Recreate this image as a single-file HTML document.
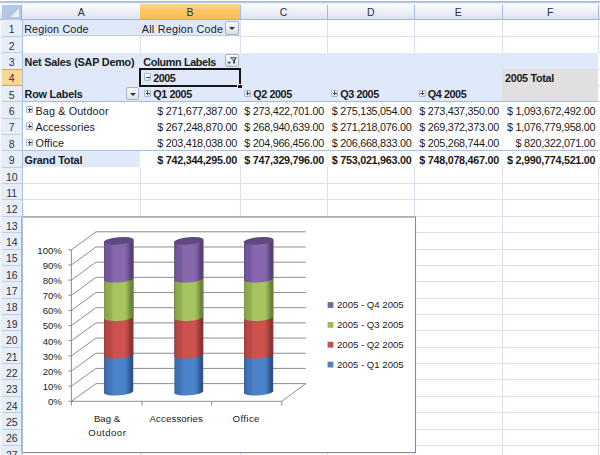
<!DOCTYPE html>
<html><head><meta charset="utf-8"><title>Pivot</title><style>
*{box-sizing:border-box;margin:0;padding:0}
html,body{width:600px;height:455px;overflow:hidden;background:#fff}
body{position:relative;font-family:"Liberation Sans",sans-serif;font-size:10.8px;color:#1a1a1a}
.a{position:absolute}
.t{position:absolute;white-space:nowrap;line-height:12px;height:12px}
.b{font-weight:bold;letter-spacing:-0.2px}
.n{text-align:right;letter-spacing:-0.27px}
.rh{position:absolute;left:0;width:22.5px;text-align:center;color:#2a3240;font-size:10.5px;line-height:12px}
.ch{position:absolute;text-align:center;color:#2a3240;font-size:10.5px;line-height:12px}
.btn{position:absolute;border:1px solid #9db6d8;border-radius:2px;background:linear-gradient(#fdfdfd,#efefef 50%,#e0e0e0)}
.btn i{position:absolute;left:2.9px;top:4.7px;width:0;height:0;border-left:3.1px solid transparent;border-right:3.1px solid transparent;border-top:3.3px solid #1d3360}
.pm{position:absolute;width:7.2px;height:7.4px;border:1px solid #a9b6cd;border-radius:1px;background:linear-gradient(135deg,#ffffff 20%,#c9d1e0)}
.pm b{position:absolute;left:0.6px;top:2.2px;width:4px;height:1px;background:#324a80}
.pm u{position:absolute;left:2.1px;top:0.7px;width:1px;height:4px;background:#324a80}
</style></head><body>
<div class="a" style="left:22.5px;top:20.0px;width:217.5px;height:16.36px;background:#dfe9fa;border-bottom:1px solid #b9cce6"></div>
<div class="a" style="left:22.5px;top:52.72px;width:575.8px;height:49.08px;background:#dfe9fa;border-bottom:1px solid #a4bddd"></div>
<div class="a" style="left:502.0px;top:69.08px;width:96.29999999999995px;height:32.12px;background:#e1dfe0"></div>
<div class="a" style="left:22.5px;top:150.48px;width:575.8px;height:1px;background:#a9c0df"></div>
<div class="a" style="left:22.5px;top:151.38px;width:117.5px;height:15.86px;background:#dfe9fa"></div>
<div class="a" style="left:240.0px;top:35.86px;width:360.0px;height:1px;background:#dcdef2"></div>
<div class="a" style="left:598.3px;top:52.22px;width:1.7000000000000455px;height:1px;background:#dcdef2"></div>
<div class="a" style="left:22.5px;top:183.10px;width:577.5px;height:1px;background:#dcdef2"></div>
<div class="a" style="left:22.5px;top:199.46px;width:577.5px;height:1px;background:#dcdef2"></div>
<div class="a" style="left:22.5px;top:215.82px;width:577.5px;height:1px;background:#dcdef2"></div>
<div class="a" style="left:22.5px;top:232.18px;width:577.5px;height:1px;background:#dcdef2"></div>
<div class="a" style="left:22.5px;top:248.54px;width:577.5px;height:1px;background:#dcdef2"></div>
<div class="a" style="left:22.5px;top:264.90px;width:577.5px;height:1px;background:#dcdef2"></div>
<div class="a" style="left:22.5px;top:281.26px;width:577.5px;height:1px;background:#dcdef2"></div>
<div class="a" style="left:22.5px;top:297.62px;width:577.5px;height:1px;background:#dcdef2"></div>
<div class="a" style="left:22.5px;top:313.98px;width:577.5px;height:1px;background:#dcdef2"></div>
<div class="a" style="left:22.5px;top:330.34px;width:577.5px;height:1px;background:#dcdef2"></div>
<div class="a" style="left:22.5px;top:346.70px;width:577.5px;height:1px;background:#dcdef2"></div>
<div class="a" style="left:22.5px;top:363.06px;width:577.5px;height:1px;background:#dcdef2"></div>
<div class="a" style="left:22.5px;top:379.42px;width:577.5px;height:1px;background:#dcdef2"></div>
<div class="a" style="left:22.5px;top:395.78px;width:577.5px;height:1px;background:#dcdef2"></div>
<div class="a" style="left:22.5px;top:412.14px;width:577.5px;height:1px;background:#dcdef2"></div>
<div class="a" style="left:22.5px;top:428.50px;width:577.5px;height:1px;background:#dcdef2"></div>
<div class="a" style="left:22.5px;top:444.86px;width:577.5px;height:1px;background:#dcdef2"></div>
<div class="a" style="left:22.5px;top:461.22px;width:577.5px;height:1px;background:#dcdef2"></div>
<div class="a" style="left:598.3px;top:68.58px;width:1.7000000000000455px;height:1px;background:#dcdef2"></div>
<div class="a" style="left:598.3px;top:84.94px;width:1.7000000000000455px;height:1px;background:#dcdef2"></div>
<div class="a" style="left:598.3px;top:101.30px;width:1.7000000000000455px;height:1px;background:#dcdef2"></div>
<div class="a" style="left:598.3px;top:117.66px;width:1.7000000000000455px;height:1px;background:#dcdef2"></div>
<div class="a" style="left:598.3px;top:134.02px;width:1.7000000000000455px;height:1px;background:#dcdef2"></div>
<div class="a" style="left:598.3px;top:150.38px;width:1.7000000000000455px;height:1px;background:#dcdef2"></div>
<div class="a" style="left:598.3px;top:166.74px;width:1.7000000000000455px;height:1px;background:#dcdef2"></div>
<div class="a" style="left:139.50px;top:36.36px;width:1px;height:16.36px;background:#dcdef2"></div>
<div class="a" style="left:139.50px;top:167.24px;width:1px;height:287.76px;background:#dcdef2"></div>
<div class="a" style="left:239.50px;top:20.00px;width:1px;height:32.72px;background:#dcdef2"></div>
<div class="a" style="left:239.50px;top:167.24px;width:1px;height:287.76px;background:#dcdef2"></div>
<div class="a" style="left:326.50px;top:20.00px;width:1px;height:32.72px;background:#dcdef2"></div>
<div class="a" style="left:326.50px;top:167.24px;width:1px;height:287.76px;background:#dcdef2"></div>
<div class="a" style="left:414.00px;top:20.00px;width:1px;height:32.72px;background:#dcdef2"></div>
<div class="a" style="left:414.00px;top:167.24px;width:1px;height:287.76px;background:#dcdef2"></div>
<div class="a" style="left:501.50px;top:20.00px;width:1px;height:32.72px;background:#dcdef2"></div>
<div class="a" style="left:501.50px;top:167.24px;width:1px;height:287.76px;background:#dcdef2"></div>
<div class="a" style="left:597.80px;top:20.00px;width:1px;height:32.72px;background:#dcdef2"></div>
<div class="a" style="left:597.80px;top:167.24px;width:1px;height:287.76px;background:#dcdef2"></div>
<div class="a" style="left:0;top:0;width:600px;height:4px;background:linear-gradient(#ffffff 0,#ffffff 18%,#a3bcdb 26%,#a3bcdb 55%,#d5e1f0 72%,#f6f9fd 100%)"></div>
<div class="a" style="left:0;top:4px;width:600px;height:16px;background:linear-gradient(#f9fbfd,#eef2f9 45%,#dfe5f2 90%);border-bottom:1px solid #9eb6d4"></div>
<div class="a" style="left:1.5px;top:4.5px;width:20.5px;height:15px;background:#b4c8e3;border-right:1px solid #9cb4d4"></div>
<svg class="a" style="left:0;top:0" width="24" height="20"><polygon points="19.2,8.6 19.2,17 10.6,17" fill="#e9eef7"/></svg>
<div class="a" style="left:139.5px;top:4.5px;width:1px;height:15px;background:#a3bbdb"></div>
<div class="ch" style="left:22.5px;top:6.3px;width:117.5px">A</div>
<div class="a" style="left:140.0px;top:4px;width:100.0px;height:16px;background:linear-gradient(#f9d79c,#fbc868 40%,#f7bd55);border-bottom:1px solid #f0a140"></div>
<div class="a" style="left:239.5px;top:4.5px;width:1px;height:15px;background:#a3bbdb"></div>
<div class="ch" style="left:140.0px;top:6.3px;width:100.0px">B</div>
<div class="a" style="left:326.5px;top:4.5px;width:1px;height:15px;background:#a3bbdb"></div>
<div class="ch" style="left:240.0px;top:6.3px;width:87.0px">C</div>
<div class="a" style="left:414.0px;top:4.5px;width:1px;height:15px;background:#a3bbdb"></div>
<div class="ch" style="left:327.0px;top:6.3px;width:87.5px">D</div>
<div class="a" style="left:501.5px;top:4.5px;width:1px;height:15px;background:#a3bbdb"></div>
<div class="ch" style="left:414.5px;top:6.3px;width:87.5px">E</div>
<div class="a" style="left:597.8px;top:4.5px;width:1px;height:15px;background:#a3bbdb"></div>
<div class="ch" style="left:502.0px;top:6.3px;width:96.29999999999995px">F</div>
<div class="a" style="left:0;top:20px;width:22.5px;height:435px;background:#e8eef8;border-left:1.5px solid #f5f8fc;border-right:1px solid #a6bfdf"></div>
<div class="a" style="left:1.5px;top:35.86px;width:20.5px;height:1px;background:#bdcee7"></div>
<div class="rh" style="top:23.30px;left:0.5px">1</div>
<div class="a" style="left:1.5px;top:52.22px;width:20.5px;height:1px;background:#bdcee7"></div>
<div class="rh" style="top:39.66px;left:0.5px">2</div>
<div class="a" style="left:1.5px;top:68.58px;width:20.5px;height:1px;background:#bdcee7"></div>
<div class="rh" style="top:56.02px;left:0.5px">3</div>
<div class="a" style="left:1.5px;top:68.58px;width:21px;height:17.16px;background:#fcd693;border-top:1px solid #f29a3c;border-bottom:1px solid #f29a3c;border-right:1px solid #f29a3c"></div>
<div class="rh" style="top:72.38px;left:0.5px">4</div>
<div class="a" style="left:1.5px;top:101.30px;width:20.5px;height:1px;background:#bdcee7"></div>
<div class="rh" style="top:88.74px;left:0.5px">5</div>
<div class="a" style="left:1.5px;top:117.66px;width:20.5px;height:1px;background:#bdcee7"></div>
<div class="rh" style="top:105.10px;left:0.5px">6</div>
<div class="a" style="left:1.5px;top:134.02px;width:20.5px;height:1px;background:#bdcee7"></div>
<div class="rh" style="top:121.46px;left:0.5px">7</div>
<div class="a" style="left:1.5px;top:150.38px;width:20.5px;height:1px;background:#bdcee7"></div>
<div class="rh" style="top:137.82px;left:0.5px">8</div>
<div class="a" style="left:1.5px;top:166.74px;width:20.5px;height:1px;background:#bdcee7"></div>
<div class="rh" style="top:154.18px;left:0.5px">9</div>
<div class="a" style="left:1.5px;top:183.10px;width:20.5px;height:1px;background:#bdcee7"></div>
<div class="rh" style="top:170.54px;left:0.5px">10</div>
<div class="a" style="left:1.5px;top:199.46px;width:20.5px;height:1px;background:#bdcee7"></div>
<div class="rh" style="top:186.90px;left:0.5px">11</div>
<div class="a" style="left:1.5px;top:215.82px;width:20.5px;height:1px;background:#bdcee7"></div>
<div class="rh" style="top:203.26px;left:0.5px">12</div>
<div class="a" style="left:1.5px;top:232.18px;width:20.5px;height:1px;background:#bdcee7"></div>
<div class="rh" style="top:219.62px;left:0.5px">13</div>
<div class="a" style="left:1.5px;top:248.54px;width:20.5px;height:1px;background:#bdcee7"></div>
<div class="rh" style="top:235.98px;left:0.5px">14</div>
<div class="a" style="left:1.5px;top:264.90px;width:20.5px;height:1px;background:#bdcee7"></div>
<div class="rh" style="top:252.34px;left:0.5px">15</div>
<div class="a" style="left:1.5px;top:281.26px;width:20.5px;height:1px;background:#bdcee7"></div>
<div class="rh" style="top:268.70px;left:0.5px">16</div>
<div class="a" style="left:1.5px;top:297.62px;width:20.5px;height:1px;background:#bdcee7"></div>
<div class="rh" style="top:285.06px;left:0.5px">17</div>
<div class="a" style="left:1.5px;top:313.98px;width:20.5px;height:1px;background:#bdcee7"></div>
<div class="rh" style="top:301.42px;left:0.5px">18</div>
<div class="a" style="left:1.5px;top:330.34px;width:20.5px;height:1px;background:#bdcee7"></div>
<div class="rh" style="top:317.78px;left:0.5px">19</div>
<div class="a" style="left:1.5px;top:346.70px;width:20.5px;height:1px;background:#bdcee7"></div>
<div class="rh" style="top:334.14px;left:0.5px">20</div>
<div class="a" style="left:1.5px;top:363.06px;width:20.5px;height:1px;background:#bdcee7"></div>
<div class="rh" style="top:350.50px;left:0.5px">21</div>
<div class="a" style="left:1.5px;top:379.42px;width:20.5px;height:1px;background:#bdcee7"></div>
<div class="rh" style="top:366.86px;left:0.5px">22</div>
<div class="a" style="left:1.5px;top:395.78px;width:20.5px;height:1px;background:#bdcee7"></div>
<div class="rh" style="top:383.22px;left:0.5px">23</div>
<div class="a" style="left:1.5px;top:412.14px;width:20.5px;height:1px;background:#bdcee7"></div>
<div class="rh" style="top:399.58px;left:0.5px">24</div>
<div class="a" style="left:1.5px;top:428.50px;width:20.5px;height:1px;background:#bdcee7"></div>
<div class="rh" style="top:415.94px;left:0.5px">25</div>
<div class="a" style="left:1.5px;top:444.86px;width:20.5px;height:1px;background:#bdcee7"></div>
<div class="rh" style="top:432.30px;left:0.5px">26</div>
<div class="a" style="left:1.5px;top:461.22px;width:20.5px;height:1px;background:#bdcee7"></div>
<div class="rh" style="top:448.66px;left:0.5px">27</div>
<div class="a" style="left:1.5px;top:477.58px;width:20.5px;height:1px;background:#bdcee7"></div>
<div class="rh" style="top:465.02px;left:0.5px">28</div>
<div class="t " style="left:24.2px;top:23.40px;letter-spacing:0.14px;">Region Code</div>
<div class="t " style="left:141.8px;top:23.40px;letter-spacing:0.22px;">All Region Code</div>
<div class="btn" style="left:225.2px;top:21.4px;width:13.8px;height:13.3px"><i></i></div>
<div class="t b" style="left:24.6px;top:56.02px;">Net Sales (SAP Demo)</div>
<div class="t b" style="left:143.2px;top:56.02px;letter-spacing:-0.35px;">Column Labels</div>
<div class="btn" style="left:225.2px;top:54.2px;width:13.6px;height:13px"></div>
<svg class="a" style="left:225.2px;top:54.2px" width="14" height="13" viewBox="0 0 14 13"><path d="M4.8 3.2 H11.9 L9.9 6.5 V9.5 H8.2 V6.5 Z" fill="#3a3a3a"/><path d="M6.9 4.1 H9.9 L9.0 5.9 H8.7 Z" fill="#ececec"/><path d="M2.3 7.7 H6.1 L4.2 10.3 Z" fill="#1f55b0"/></svg>
<div class="pm" style="left:144.0px;top:73.38px"><b></b></div>
<div class="t b" style="left:153.2px;top:72.18px;letter-spacing:-0.45px;">2005</div>
<div class="t b" style="left:505.0px;top:72.18px;letter-spacing:-0.3px;">2005 Total</div>
<div class="t b" style="left:24.6px;top:88.04px;">Row Labels</div>
<div class="btn" style="left:126.4px;top:87.0px;width:13.0px;height:13.0px"><i></i></div>
<div class="pm" style="left:144.0px;top:89.74px"><b></b><u></u></div>
<div class="t b" style="left:153.2px;top:88.04px;letter-spacing:-0.4px;">Q1 2005</div>
<div class="pm" style="left:244.0px;top:89.74px"><b></b><u></u></div>
<div class="t b" style="left:253.2px;top:88.04px;letter-spacing:-0.4px;">Q2 2005</div>
<div class="pm" style="left:331.0px;top:89.74px"><b></b><u></u></div>
<div class="t b" style="left:340.2px;top:88.04px;letter-spacing:-0.4px;">Q3 2005</div>
<div class="pm" style="left:418.5px;top:89.74px"><b></b><u></u></div>
<div class="t b" style="left:427.7px;top:88.04px;letter-spacing:-0.4px;">Q4 2005</div>
<div class="pm" style="left:26.3px;top:106.10px"><b></b><u></u></div>
<div class="t " style="left:35.4px;top:104.80px;letter-spacing:0.14px;">Bag &amp; Outdoor</div>
<div class="t n " style="left:140.0px;width:97.0px;top:104.80px">$ 271,677,387.00</div>
<div class="t n " style="left:240.0px;width:84.0px;top:104.80px">$ 273,422,701.00</div>
<div class="t n " style="left:327.0px;width:84.5px;top:104.80px">$ 275,135,054.00</div>
<div class="t n " style="left:414.5px;width:84.5px;top:104.80px">$ 273,437,350.00</div>
<div class="t n " style="left:502.0px;width:93.29999999999995px;top:104.80px">$ 1,093,672,492.00</div>
<div class="pm" style="left:26.3px;top:122.46px"><b></b><u></u></div>
<div class="t " style="left:35.4px;top:120.86px;letter-spacing:0.14px;">Accessories</div>
<div class="t n " style="left:140.0px;width:97.0px;top:120.86px">$ 267,248,870.00</div>
<div class="t n " style="left:240.0px;width:84.0px;top:120.86px">$ 268,940,639.00</div>
<div class="t n " style="left:327.0px;width:84.5px;top:120.86px">$ 271,218,076.00</div>
<div class="t n " style="left:414.5px;width:84.5px;top:120.86px">$ 269,372,373.00</div>
<div class="t n " style="left:502.0px;width:93.29999999999995px;top:120.86px">$ 1,076,779,958.00</div>
<div class="pm" style="left:26.3px;top:138.82px"><b></b><u></u></div>
<div class="t " style="left:35.4px;top:137.12px;letter-spacing:0.14px;">Office</div>
<div class="t n " style="left:140.0px;width:97.0px;top:137.12px">$ 203,418,038.00</div>
<div class="t n " style="left:240.0px;width:84.0px;top:137.12px">$ 204,966,456.00</div>
<div class="t n " style="left:327.0px;width:84.5px;top:137.12px">$ 206,668,833.00</div>
<div class="t n " style="left:414.5px;width:84.5px;top:137.12px">$ 205,268,744.00</div>
<div class="t n " style="left:502.0px;width:93.29999999999995px;top:137.12px">$ 820,322,071.00</div>
<div class="t b" style="left:24.6px;top:153.78px;">Grand Total</div>
<div class="t n b" style="left:140.0px;width:97.0px;top:153.78px">$ 742,344,295.00</div>
<div class="t n b" style="left:240.0px;width:84.0px;top:153.78px">$ 747,329,796.00</div>
<div class="t n b" style="left:327.0px;width:84.5px;top:153.78px">$ 753,021,963.00</div>
<div class="t n b" style="left:414.5px;width:84.5px;top:153.78px">$ 748,078,467.00</div>
<div class="t n b" style="left:502.0px;width:93.29999999999995px;top:153.78px">$ 2,990,774,521.00</div>
<div class="a" style="left:139.3px;top:68.1px;width:101.4px;height:19px;border:2.7px solid #141414"></div>
<div class="a" style="left:237.4px;top:83.8px;width:4.6px;height:4.6px;background:#141414;border-left:0.8px solid #fff;border-top:0.8px solid #fff"></div>
<svg class="a" style="left:0;top:0" width="600" height="455" viewBox="0 0 600 455" font-family="Liberation Sans, sans-serif" font-size="9.6">
<defs>
<linearGradient id="gP" x1="0" x2="1" y1="0" y2="0"><stop offset="0" stop-color="#654d86"/><stop offset="0.06" stop-color="#6f5598"/><stop offset="0.25" stop-color="#795ca2"/><stop offset="0.31" stop-color="#8767ad"/><stop offset="0.72" stop-color="#8767ad"/><stop offset="0.81" stop-color="#74589a"/><stop offset="0.92" stop-color="#584173"/><stop offset="1" stop-color="#584173"/></linearGradient>
<linearGradient id="gG" x1="0" x2="1" y1="0" y2="0"><stop offset="0" stop-color="#7c9644"/><stop offset="0.06" stop-color="#89a64d"/><stop offset="0.25" stop-color="#94b355"/><stop offset="0.31" stop-color="#a6c560"/><stop offset="0.72" stop-color="#a6c560"/><stop offset="0.81" stop-color="#8eab51"/><stop offset="0.92" stop-color="#6c843a"/><stop offset="1" stop-color="#6c843a"/></linearGradient>
<linearGradient id="gR" x1="0" x2="1" y1="0" y2="0"><stop offset="0" stop-color="#9e3b38"/><stop offset="0.06" stop-color="#b04441"/><stop offset="0.25" stop-color="#bc4a47"/><stop offset="0.31" stop-color="#cb524e"/><stop offset="0.72" stop-color="#cb524e"/><stop offset="0.81" stop-color="#b24542"/><stop offset="0.92" stop-color="#8b3330"/><stop offset="1" stop-color="#8b3330"/></linearGradient>
<linearGradient id="gB" x1="0" x2="1" y1="0" y2="0"><stop offset="0" stop-color="#355f9c"/><stop offset="0.06" stop-color="#3d6dae"/><stop offset="0.25" stop-color="#4477bd"/><stop offset="0.31" stop-color="#4b83cb"/><stop offset="0.72" stop-color="#4b83cb"/><stop offset="0.81" stop-color="#3f70b3"/><stop offset="0.92" stop-color="#2e5389"/><stop offset="1" stop-color="#2e5389"/></linearGradient>
</defs>
<rect x="22.0" y="217.0" width="393.5" height="235.60000000000002" fill="#fff" stroke="#898989" stroke-width="1.1"/>
<path d="M68.4 401.30 H71.4 L96.0 383.60 H305.8" fill="none" stroke="#808080" stroke-width="0.9"/>
<text x="61.900000000000006" y="405.20" text-anchor="end" fill="#1a1a1a">0%</text>
<path d="M68.4 386.15 H71.4 L96.0 368.42 H305.8" fill="none" stroke="#808080" stroke-width="0.9"/>
<text x="61.900000000000006" y="390.05" text-anchor="end" fill="#1a1a1a">10%</text>
<path d="M68.4 371.00 H71.4 L96.0 353.24 H305.8" fill="none" stroke="#808080" stroke-width="0.9"/>
<text x="61.900000000000006" y="374.90" text-anchor="end" fill="#1a1a1a">20%</text>
<path d="M68.4 355.85 H71.4 L96.0 338.06 H305.8" fill="none" stroke="#808080" stroke-width="0.9"/>
<text x="61.900000000000006" y="359.75" text-anchor="end" fill="#1a1a1a">30%</text>
<path d="M68.4 340.70 H71.4 L96.0 322.88 H305.8" fill="none" stroke="#808080" stroke-width="0.9"/>
<text x="61.900000000000006" y="344.60" text-anchor="end" fill="#1a1a1a">40%</text>
<path d="M68.4 325.55 H71.4 L96.0 307.70 H305.8" fill="none" stroke="#808080" stroke-width="0.9"/>
<text x="61.900000000000006" y="329.45" text-anchor="end" fill="#1a1a1a">50%</text>
<path d="M68.4 310.40 H71.4 L96.0 292.52 H305.8" fill="none" stroke="#808080" stroke-width="0.9"/>
<text x="61.900000000000006" y="314.30" text-anchor="end" fill="#1a1a1a">60%</text>
<path d="M68.4 295.25 H71.4 L96.0 277.34 H305.8" fill="none" stroke="#808080" stroke-width="0.9"/>
<text x="61.900000000000006" y="299.15" text-anchor="end" fill="#1a1a1a">70%</text>
<path d="M68.4 280.10 H71.4 L96.0 262.16 H305.8" fill="none" stroke="#808080" stroke-width="0.9"/>
<text x="61.900000000000006" y="284.00" text-anchor="end" fill="#1a1a1a">80%</text>
<path d="M68.4 264.95 H71.4 L96.0 246.98 H305.8" fill="none" stroke="#808080" stroke-width="0.9"/>
<text x="61.900000000000006" y="268.85" text-anchor="end" fill="#1a1a1a">90%</text>
<path d="M68.4 249.80 H71.4 L96.0 231.80 H305.8" fill="none" stroke="#808080" stroke-width="0.9"/>
<text x="61.900000000000006" y="253.70" text-anchor="end" fill="#1a1a1a">100%</text>
<path d="M71.4 249.8 V405.7" fill="none" stroke="#808080" stroke-width="0.9"/>
<path d="M71.4 401.3 H281.8 L305.8 383.6" fill="none" stroke="#808080" stroke-width="0.9"/>
<path d="M142.0 401.3 v4.4" stroke="#808080" stroke-width="0.9"/>
<path d="M211.7 401.3 v4.4" stroke="#808080" stroke-width="0.9"/>
<path d="M281.8 401.3 v4.4" stroke="#808080" stroke-width="0.9"/>
<path d="M104.0 241.8 V393.6 A14.850000000000005 3.4 -4 0 0 133.3 391.2 V239.7 Z" fill="url(#gB)"/>
<path d="M104.0 241.8 V356.4 A14.850000000000005 3.4 -4 0 0 133.3 354.7 V239.7 Z" fill="url(#gR)"/>
<path d="M104.0 241.8 V318.8 A14.850000000000005 3.4 -4 0 0 133.3 317.1 V239.7 Z" fill="url(#gG)"/>
<path d="M104.0 241.8 V280.4 A14.850000000000005 3.4 -4 0 0 133.3 278.6 V239.7 Z" fill="url(#gP)"/>
<ellipse cx="118.65" cy="240.85" rx="14.950000000000005" ry="3.7" transform="rotate(-5 118.65 240.75)" fill="#5e4a80"/>
<path d="M174.4 241.8 V393.6 A14.59999999999999 3.4 -4 0 0 203.2 391.2 V239.7 Z" fill="url(#gB)"/>
<path d="M174.4 241.8 V356.4 A14.59999999999999 3.4 -4 0 0 203.2 354.7 V239.7 Z" fill="url(#gR)"/>
<path d="M174.4 241.8 V318.8 A14.59999999999999 3.4 -4 0 0 203.2 317.1 V239.7 Z" fill="url(#gG)"/>
<path d="M174.4 241.8 V280.4 A14.59999999999999 3.4 -4 0 0 203.2 278.6 V239.7 Z" fill="url(#gP)"/>
<ellipse cx="188.8" cy="240.85" rx="14.69999999999999" ry="3.7" transform="rotate(-5 188.8 240.75)" fill="#5e4a80"/>
<path d="M244.0 241.8 V393.6 A14.799999999999994 3.4 -4 0 0 273.2 391.2 V239.7 Z" fill="url(#gB)"/>
<path d="M244.0 241.8 V356.4 A14.799999999999994 3.4 -4 0 0 273.2 354.7 V239.7 Z" fill="url(#gR)"/>
<path d="M244.0 241.8 V318.8 A14.799999999999994 3.4 -4 0 0 273.2 317.1 V239.7 Z" fill="url(#gG)"/>
<path d="M244.0 241.8 V280.4 A14.799999999999994 3.4 -4 0 0 273.2 278.6 V239.7 Z" fill="url(#gP)"/>
<ellipse cx="258.6" cy="240.85" rx="14.899999999999993" ry="3.7" transform="rotate(-5 258.6 240.75)" fill="#5e4a80"/>
<text x="107" y="422" text-anchor="middle" fill="#1a1a1a">Bag &amp;</text>
<text x="107.3" y="435.6" text-anchor="middle" fill="#1a1a1a" letter-spacing="0.5">Outdoor</text>
<text x="176.2" y="422" text-anchor="middle" fill="#1a1a1a" letter-spacing="0.15">Accessories</text>
<text x="246.2" y="422" text-anchor="middle" fill="#1a1a1a" letter-spacing="0.4">Office</text>
<rect x="327.6" y="302.1" width="5.8" height="5.8" fill="#8064a2"/>
<text x="337" y="308.4" fill="#1a1a1a">2005 - Q4 2005</text>
<rect x="327.6" y="322.0" width="5.8" height="5.8" fill="#9bbb59"/>
<text x="337" y="328.29999999999995" fill="#1a1a1a">2005 - Q3 2005</text>
<rect x="327.6" y="341.8" width="5.8" height="5.8" fill="#c0504d"/>
<text x="337" y="348.09999999999997" fill="#1a1a1a">2005 - Q2 2005</text>
<rect x="327.6" y="361.70000000000005" width="5.8" height="5.8" fill="#4f81bd"/>
<text x="337" y="368.0" fill="#1a1a1a">2005 - Q1 2005</text>
</svg>
<div class="a" style="left:21.5px;top:20px;width:1px;height:435px;background:#a6bfdf"></div>
</body></html>
